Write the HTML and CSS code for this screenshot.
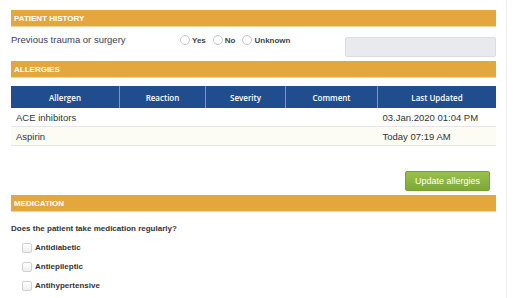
FILE: index.html
```html
<!DOCTYPE html>
<html lang="en">

<head>
    <meta charset="UTF-8">
    <title>Patient Record</title>
    <link rel="stylesheet" href="styles.css">
</head>

<body>
    <div class="panel">
        <div class="bar">PATIENT HISTORY</div>
        <div class="history-row">
            <span class="history-label">Previous trauma or surgery</span>
            <div class="radios">
                <label class="radio"><span class="circle"></span>Yes</label>
                <label class="radio"><span class="circle"></span>No</label>
                <label class="radio"><span class="circle"></span>Unknown</label>
            </div>
            <div class="text-box"></div>
        </div>

        <div class="bar">ALLERGIES</div>
        <table class="allergies">
            <thead>
                <tr>
                    <th class="col-allergen">Allergen</th>
                    <th class="col-reaction">Reaction</th>
                    <th class="col-severity">Severity</th>
                    <th class="col-comment">Comment</th>
                    <th>Last Updated</th>
                </tr>
            </thead>
            <tbody>
                <tr>
                    <td>ACE inhibitors</td>
                    <td></td>
                    <td></td>
                    <td></td>
                    <td>03.Jan.2020 01:04 PM</td>
                </tr>
                <tr class="alt">
                    <td>Aspirin</td>
                    <td></td>
                    <td></td>
                    <td></td>
                    <td>Today 07:19 AM</td>
                </tr>
            </tbody>
        </table>
        <div class="actions">
            <button class="button">Update allergies</button>
        </div>

        <div class="bar">MEDICATION</div>
        <p class="question">Does the patient take medication regularly?</p>
        <ul class="checklist">
            <li><span class="box"></span>Antidiabetic</li>
            <li><span class="box"></span>Antiepileptic</li>
            <li><span class="box"></span>Antihypertensive</li>
        </ul>
    </div>
</body>

</html>
```

FILE: styles.css
```css
body {
    margin: 0;
    background-color: #fff;
    font-family: "Liberation Sans", Arial, sans-serif;
    color: #333;
    overflow: hidden;
}

.panel {
    width: 485px;
    height: 298px;
    padding: 10px 10px 0 11px;
    border-left: 1px solid #ececec;
    border-right: 1px solid #ececec;
    margin-left: -1px;
}

.bar {
    height: 17px;
    line-height: 17px;
    background-color: #e3a73e;
    border-bottom: 1px solid #f1d39c;
    box-sizing: border-box;
    color: #fff;
    font-size: 8px;
    font-weight: bold;
    padding-left: 3px;
}

.history-row {
    display: flex;
    align-items: flex-start;
    height: 34px;
}

.history-label {
    font-size: 9.5px;
    color: #3b3d5c;
    margin-top: 7px;
    width: 169px;
}

.radios {
    display: flex;
    margin-top: 8px;
    width: 165px;
}

.radio {
    display: flex;
    align-items: center;
    font-size: 8px;
    font-weight: bold;
    color: #444;
    margin-right: 7px;
}

.circle {
    width: 8px;
    height: 8px;
    border: 1px solid #c8c8c8;
    border-radius: 50%;
    background: #fff;
    margin-right: 2px;
}

.text-box {
    width: 149px;
    height: 18px;
    margin-top: 10px;
    background-color: #e9eaee;
    border: 1px solid #dcdde1;
    border-radius: 2px;
}

.allergies {
    width: 485px;
    border-collapse: collapse;
    margin-top: 8px;
    table-layout: fixed;
}

.allergies th {
    background-color: #1f4d8e;
    color: #fff;
    font-family: "Open Sans", sans-serif;
    font-size: 8px;
    font-weight: 600;
    height: 22px;
    padding: 0;
    border-left: 1px solid #7d98bf;
    text-align: center;
}

.allergies th:first-child {
    border-left: none;
}

.col-allergen { width: 108px; }
.col-reaction { width: 85px; }
.col-severity { width: 79px; }
.col-comment { width: 91px; }

.allergies td {
    height: 18px;
    padding: 0 0 0 5px;
    font-size: 9.5px;
    color: #333;
    border-bottom: 1px solid #e6e6e6;
}

.allergies tr.alt td {
    background-color: #fcfbf4;
}

.actions {
    display: flex;
    justify-content: flex-end;
    padding: 25px 6px 4px 0;
}

.button {
    width: 85px;
    height: 20px;
    background: linear-gradient(#97c14b, #7fa936);
    border: 1px solid #78a22f;
    border-radius: 2px;
    color: #fff;
    font-family: "Liberation Sans", Arial, sans-serif;
    font-size: 9px;
    padding: 0;
}

.question {
    margin: 12px 0 0 0;
    font-size: 8px;
    font-weight: bold;
    color: #333;
}

.checklist {
    list-style: none;
    margin: 5px 0 0 11px;
    padding: 0;
}

.checklist li {
    display: flex;
    align-items: center;
    height: 19px;
    font-size: 8px;
    font-weight: bold;
    color: #333;
}

.box {
    width: 8px;
    height: 8px;
    border: 1px solid #d0d0d0;
    border-radius: 2px;
    background: linear-gradient(#fff, #eee);
    margin-right: 3px;
}
```
